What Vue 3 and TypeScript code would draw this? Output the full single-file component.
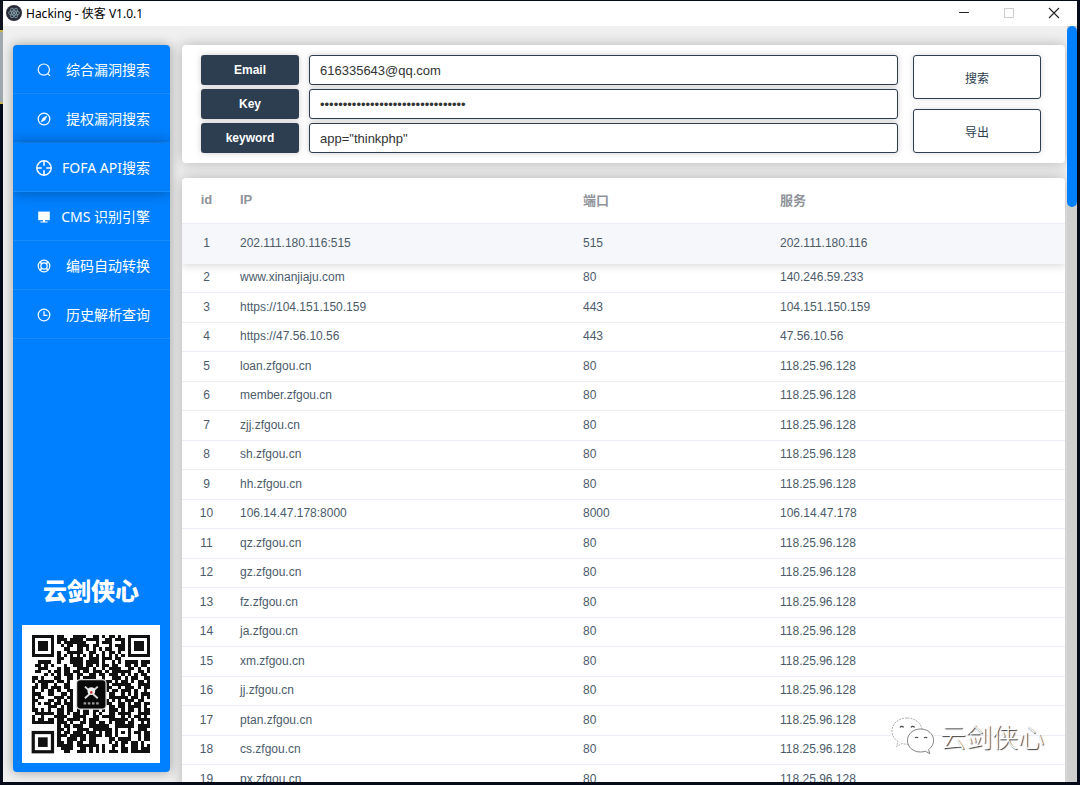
<script setup lang="ts">
import { ref } from 'vue'

interface Row {
  id: number
  ip: string
  port: string
  service: string
}

const menu: { icon: string; label: string }[] = [
  { icon: 'search', label: '综合漏洞搜索' },
  { icon: 'compass', label: '提权漏洞搜索' },
  { icon: 'aim', label: 'FOFA API搜索' },
  { icon: 'monitor', label: 'CMS 识别引擎' },
  { icon: 'ring', label: '编码自动转换' },
  { icon: 'clock', label: '历史解析查询' },
]
const active = ref(2)
const email = ref('616335643@qq.com')
const key = ref('x'.repeat(32))
const keyword = ref('app="thinkphp"')

const shared = '118.25.96.128'
const source: [string, string, string][] = [
  ['202.111.180.116:515', '515', '202.111.180.116'],
  ['www.xinanjiaju.com', '80', '140.246.59.233'],
  ['https://104.151.150.159', '443', '104.151.150.159'],
  ['https://47.56.10.56', '443', '47.56.10.56'],
  ['loan.zfgou.cn', '80', shared],
  ['member.zfgou.cn', '80', shared],
  ['zjj.zfgou.cn', '80', shared],
  ['sh.zfgou.cn', '80', shared],
  ['hh.zfgou.cn', '80', shared],
  ['106.14.47.178:8000', '8000', '106.14.47.178'],
  ['qz.zfgou.cn', '80', shared],
  ['gz.zfgou.cn', '80', shared],
  ['fz.zfgou.cn', '80', shared],
  ['ja.zfgou.cn', '80', shared],
  ['xm.zfgou.cn', '80', shared],
  ['jj.zfgou.cn', '80', shared],
  ['ptan.zfgou.cn', '80', shared],
  ['cs.zfgou.cn', '80', shared],
  ['px.zfgou.cn', '80', shared],
]
const rows: Row[] = source.map(([ip, port, service], i) => ({ id: i + 1, ip, port, service }))

const modules: string[] = [
  '#######.##...####..##.#.##.#..#######',
  '#.....#.###.####.####..##.###.#.....#',
  '#.###.#.#.#######...#.###...#.#.###.#',
  '#.###.#..#.##.####.##...#.###.#.###.#',
  '#.###.#...##..##.#.#.#.##..##.#.###.#',
  '#.....#.#..#####..##..#.##.#..#.....#',
  '#######.#.#.#.#.#.#.#.#.#.#.#.#######',
  '........##..####..###.###.##.........',
  '..####..#...####.####.#..#.#.####.###',
  '.##.#.#...#..###.##.#.##.##..##.#.##.',
  '..###...#.##..####.#..#.####..##.#..#',
  '.##..#.##.##.##.##.###.#.######..##.#',
  '....#.#.#.###.##..##.##.###.#.#.#.##.',
  '##.#...##..##.#.####..#..###.#.##..##',
  '#.#####.##.#...........##.#.##.#.##.#',
  '.#.##..#..##...........#.######..####',
  '##.##.###.##...........##..#.###.#.##',
  '#..#.##.#..##..........#.##.###.#..#.',
  '###..##..##.#...........##..#.#.#.###',
  '#.##...###.##...........######.##.#.#',
  '##...##.#.#.#..........#.#.#.###.##..',
  '#.#.##.##.###..........##..##.#.##.##',
  '#....###.#.##...........##.##.####.#.',
  '##.#.#..##.##.#.##.##.#.###.#.##.#.##',
  '.######.##.#.##.##.#.#..##.####..####',
  '#..#...####..####..##.####..#.#.##.#.',
  '#.##.##.##.####.#.###...######.#.####',
  '#######.###.#..##.##.##.#.###.##..#.#',
  '........#.##.###..######..######.####',
  '........##.#..####.######.#...#..###.',
  '........#.##.###.###.#.##.#.#.#.##.##',
  '........###.#####.####.##.#...#..#.##',
  '........#..###.##.##....##.####..#.##',
  '........##.##.##..##....#.#.##.##.#..',
  '........#####.#######.#..##.#..##.#.#',
  '.........####..##.#.#.#..#..##.##.###',
  '..........##..###.#.#.#.###.##.######',
]
const qrPath = modules
  .map((line, y) =>
    Array.from(line)
      .map((cell, x) => (cell === '#' ? `M${x} ${y}h1v1h-1z` : ''))
      .join(''),
  )
  .join('')
</script>

<template>
  <div class="desktop">
    <div class="window">
      <header class="titlebar">
        <svg class="app-icon" viewBox="0 0 16 16" aria-hidden="true">
          <circle cx="8" cy="8" r="8" fill="#2b2e3a" />
          <g fill="none" stroke="#8fb2bd" stroke-width="0.7">
            <ellipse cx="8" cy="8" rx="5.4" ry="2.1" />
            <ellipse cx="8" cy="8" rx="5.4" ry="2.1" transform="rotate(60 8 8)" />
            <ellipse cx="8" cy="8" rx="5.4" ry="2.1" transform="rotate(120 8 8)" />
          </g>
          <circle cx="8" cy="8" r="0.9" fill="#9fc2cd" />
        </svg>
        <span class="title">Hacking - 侠客 V1.0.1</span>
        <button class="win-btn" type="button" aria-label="最小化">
          <svg viewBox="0 0 12 12"><path d="M1 5.5h10" stroke="#222" fill="none" /></svg>
        </button>
        <button class="win-btn" type="button" aria-label="最大化" disabled>
          <svg viewBox="0 0 12 12"><path d="M1.500 1.500h9v9h-9z" stroke="#ccc" fill="none" /></svg>
        </button>
        <button class="win-btn" type="button" aria-label="关闭">
          <svg viewBox="0 0 12 12"><path d="M1 1l10 10M11 1L1 11" stroke="#222" stroke-width="1.1" fill="none" /></svg>
        </button>
      </header>

      <div class="content">
        <aside class="sidebar">
          <nav class="menu">
            <button
              v-for="(item, i) in menu"
              :key="item.icon"
              type="button"
              class="menu-item"
              :class="{ active: i === active }"
              @click="active = i"
            >
              <svg class="menu-icon" viewBox="0 0 16 16" fill="none" stroke="#fff" stroke-width="1.2" aria-hidden="true">
                <template v-if="item.icon === 'search'">
                  <circle cx="7.8" cy="7.6" r="5.6" />
                  <path d="M11.8 11.6l2.2 2.2" />
                </template>
                <template v-else-if="item.icon === 'compass'">
                  <circle cx="8" cy="8" r="5.8" />
                  <path d="M10.9 5.1L9 9l-3.9 1.9L7 7z" fill="#fff" stroke-width="0.6" />
                </template>
                <template v-else-if="item.icon === 'aim'">
                  <circle cx="8" cy="8" r="7.2" stroke-width="1.4" />
                  <path d="M8 1v4.700M8 10.300V15M1 8h4.700M10.300 8H15" stroke-width="1.5" />
                </template>
                <template v-else-if="item.icon === 'monitor'">
                  <path d="M2.2 2.6h11.6v8.6H2.2z" fill="#fff" stroke="none" />
                  <path d="M7 11h2v1.6h2.6v1H4.4v-1H7z" fill="#fff" stroke="none" />
                </template>
                <template v-else-if="item.icon === 'ring'">
                  <circle cx="8" cy="8" r="5.8" />
                  <circle cx="8" cy="8" r="3.2" />
                  <path d="M4 4l1.800 1.800M12 4l-1.800 1.800M4 12l1.800-1.800M12 12l-1.800-1.800" stroke-width="1.6" />
                </template>
                <template v-else>
                  <circle cx="8" cy="8" r="5.8" />
                  <path d="M8 4.2v4.1h3.4" />
                </template>
              </svg>
              <span>{{ item.label }}</span>
            </button>
          </nav>
          <div class="brand">
            <h1>云剑侠心</h1>
            <svg class="qr" viewBox="-3 -3 43 43" role="img" aria-label="云剑侠心">
              <path :d="qrPath" fill="#111" shape-rendering="crispEdges" />
              <path d="M0 30h7v7h-7z" fill="#111" />
              <path d="M1 31h5v5h-5z" fill="#fff" />
              <path d="M2 32h3v3h-3z" fill="#111" />
              <rect x="13.8" y="13.8" width="9.6" height="9.6" rx="1.4" fill="#ddd" />
              <rect x="14.2" y="14.2" width="8.8" height="8.8" rx="1" fill="#080808" />
              <path d="M16.6 16.2l4 3.6M20.6 16.2l-4 3.6" stroke="#ddd" stroke-width="0.6" fill="none" />
              <circle cx="18.6" cy="17.6" r="1.2" fill="#eee" />
              <circle cx="18.6" cy="18" r="0.4" fill="#c33" />
              <path d="M16.2 21.4h4.8" stroke="#999" stroke-width="0.7" stroke-dasharray="0.8 0.5" />
            </svg>
          </div>
        </aside>

        <main class="main">
          <form class="panel form" @submit.prevent>
            <div class="fields">
              <label for="email">Email</label>
              <input id="email" v-model="email" type="text" />
              <label for="key">Key</label>
              <input id="key" v-model="key" type="password" />
              <label for="keyword">keyword</label>
              <input id="keyword" v-model="keyword" type="text" />
            </div>
            <div class="actions">
              <button type="submit">搜索</button>
              <button type="button">导出</button>
            </div>
          </form>

          <section class="panel results">
            <table>
              <colgroup>
                <col class="c-id" />
                <col />
                <col class="c-port" />
                <col class="c-service" />
              </colgroup>
              <thead>
                <tr><th>id</th><th>IP</th><th>端口</th><th>服务</th></tr>
              </thead>
              <tbody>
                <tr v-for="row in rows" :key="row.id" :class="{ current: row.id === 1 }">
                  <td>{{ row.id }}</td>
                  <td>{{ row.ip }}</td>
                  <td>{{ row.port }}</td>
                  <td>{{ row.service }}</td>
                </tr>
              </tbody>
            </table>
          </section>
        </main>

        <div class="scrollbar"><div class="thumb"></div></div>
      </div>

      <div class="watermark">
        <svg viewBox="0 0 44 38" aria-hidden="true">
          <g fill="#fff" stroke="#999" stroke-width="0.8">
            <path d="M16 1C7.500 1 1 6.500 1 14c0 4.400 2.200 7.900 6 10.500L5.500 29.500l5.500-3c2 .5 3.500 .8 6 .8C25 27 31 21.500 31 14S24.500 1 16 1z" stroke-dasharray="2 1" />
            <path d="M29.500 12C22 12 16.500 17 16.500 23.500S22 35 29.500 35c1.800 0 3.200-.3 4.800-.8l4.500 2.500-1.200-4.200c3-2.200 5-5.300 5-9C42.600 17 37 12 29.500 12z" stroke="#666" />
          </g>
          <path d="M9 10.500a2 2 0 0 1 3.600 0M20 10.500a2 2 0 0 1 3.600 0M24 21a2 2 0 0 1 3.200 0M33 21a2 2 0 0 1 3.200 0" fill="none" stroke="#444" stroke-width="1.100" />
        </svg>
        <span>云剑侠心</span>
      </div>
    </div>
  </div>
</template>

<style>
body {
  margin: 0;
  background: #050b18;
}
</style>

<style scoped>
* {
  box-sizing: border-box;
}
button,
input {
  font-family: inherit;
}
.desktop {
  height: 100vh;
  padding: 1px 3px 3px;
  background: linear-gradient(#10151f 30px, #c9b44a 30px, #c9b44a 32px, #9fa9ad 32px, #9fa9ad 102px, #c9b44a 102px, #c9b44a 104px, #050b18 104px);
  background-size: 3px 100%;
  background-repeat: no-repeat;
  font-family: "Liberation Sans", "Noto Sans CJK SC", sans-serif;
}
.window {
  position: relative;
  display: flex;
  flex-direction: column;
  height: 100%;
  overflow: hidden;
  background: #f0f0f0;
}
.titlebar {
  display: flex;
  align-items: center;
  flex: none;
  height: 25px;
  padding: 0 1px 1px 3px;
  background: #fff;
}
.app-icon {
  width: 16px;
  height: 16px;
}
.title {
  flex: 1;
  margin-left: 4px;
  font: 12px "Noto Sans", "Noto Sans CJK SC", sans-serif;
  color: #000;
}
.win-btn {
  display: flex;
  align-items: center;
  justify-content: center;
  width: 45px;
  height: 24px;
  padding: 0;
  border: 0;
  background: none;
}
.win-btn svg {
  width: 12px;
  height: 12px;
}
.content {
  display: flex;
  flex: 1;
  min-height: 0;
}
.sidebar {
  display: flex;
  flex-direction: column;
  justify-content: space-between;
  flex: none;
  width: 157px;
  margin: 19px 12px 10px 10px;
  border-radius: 4px;
  background: #0080ff;
  box-shadow: 0 0 12px rgba(0, 0, 0, 0.35);
}
.menu {
  display: flex;
  flex-direction: column;
}
.menu-item {
  display: flex;
  align-items: center;
  justify-content: space-between;
  height: 49px;
  padding: 2px 20px 0 23px;
  border: 0;
  border-bottom: 1px solid #1a8cff;
  background: none;
  font: 14px/20px "Noto Sans", "Noto Sans CJK SC", sans-serif;
  color: #fff;
}
.menu-item.active {
  position: relative;
  background: #0080ff;
  box-shadow: 0 0 14px rgba(0, 0, 0, 0.35);
  clip-path: inset(-20px 0);
}
.menu-icon {
  width: 16px;
  height: 16px;
}
.brand {
  display: flex;
  flex-direction: column;
  gap: 17px;
  padding: 0 10px 9px 9px;
}
.brand h1 {
  margin: 0;
  font: 900 24px/36px "Noto Sans CJK SC", sans-serif;
  text-align: center;
  color: #fff;
}
.qr {
  width: 138px;
  height: 138px;
  background: #fff;
}
.main {
  display: flex;
  flex-direction: column;
  flex: 1;
  gap: 15px;
  min-width: 0;
  padding-top: 19px;
}
.panel {
  flex: none;
  border-radius: 4px;
  background: #fff;
  box-shadow: 0 0 14px rgba(0, 0, 0, 0.25);
}
.form {
  display: flex;
  gap: 15px;
  padding: 10px 24px 10px 19px;
}
.fields {
  display: grid;
  flex: 1;
  grid-template-columns: 98px 1fr;
  gap: 4px 10px;
}
.fields label {
  border-radius: 3px;
  background: #2c3e50;
  box-shadow: 0 0 6px rgba(0, 0, 0, 0.2);
  font-size: 12px;
  font-weight: bold;
  line-height: 30px;
  text-align: center;
  color: #fff;
}
.fields input {
  min-width: 0;
  height: 30px;
  padding: 0 10px;
  border: 1px solid #2c3e50;
  border-radius: 3px;
  background: #fff;
  box-shadow: 0 0 6px rgba(0, 0, 0, 0.2);
  font-size: 13px;
  color: #333;
}
.actions {
  display: flex;
  flex-direction: column;
  gap: 10px;
  width: 128px;
}
.actions button {
  flex: 1;
  border: 1px solid #2c3e50;
  border-radius: 3px;
  background: #fff;
  box-shadow: 0 0 6px rgba(0, 0, 0, 0.15);
  font-size: 12px;
  color: #2c3e50;
}
table {
  width: 100%;
  table-layout: fixed;
  border-collapse: separate;
  border-spacing: 0;
}
.c-id {
  width: 49px;
}
.c-port {
  width: 197px;
}
.c-service {
  width: 294px;
}
th,
td {
  padding: 0 0 2px 9px;
  border-bottom: 1px solid #ebeef5;
  text-align: left;
}
th:first-child,
td:first-child {
  padding-left: 0;
  text-align: center;
}
th {
  height: 46px;
  font-size: 13px;
  color: #909399;
}
td {
  height: 29px;
  font-size: 12px;
  line-height: 16px;
  color: #4b5b6b;
}
tr:nth-child(odd) td {
  height: 30px;
}
tr.current {
  position: relative;
  box-shadow: 0 2px 8px rgba(0, 0, 0, 0.15);
  clip-path: inset(0 0 -12px);
}
tr.current td {
  height: 40px;
  border-color: #f5f7fa;
  background: #f5f7fa;
}
.scrollbar {
  flex: none;
  width: 10px;
  margin-left: 2px;
  background: #cfcfcf;
}
.thumb {
  height: 24%;
  border-radius: 5px;
  background: #0080ff;
}
.watermark {
  position: absolute;
  right: 33px;
  bottom: 27px;
  display: flex;
  align-items: center;
  gap: 5px;
  font: 300 26px/38px "Noto Sans CJK SC", sans-serif;
  color: #fff;
  text-shadow: 1px 1px 1px #333;
}
.watermark svg {
  width: 44px;
  height: 38px;
}
</style>
